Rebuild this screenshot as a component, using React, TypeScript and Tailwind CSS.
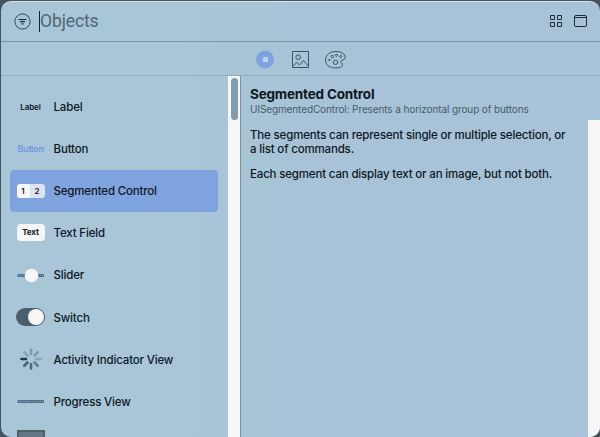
import type { ReactNode } from 'react';

const dots = 'bg-[repeating-linear-gradient(90deg,#8098a8_0_1px,#a8c4d4_1px_2px)]';

function Track({ split }: { split?: boolean }) {
  return (
    <svg width="28" height="13" viewBox="0 0 28 13" className="overflow-visible">
      <path d="M1 5.5h26M1 7.5h26" stroke="#566b7a" strokeWidth="1" />
      <path d="M1 6.5h26" stroke="#8ea5b4" strokeWidth="1" />
      <path d="M1 6.5h13" stroke="#6c8cd4" strokeWidth="1" />
      <path d="M.5 5.5v2" stroke="#6080d0" />
      <path d="M14 6.5h13" stroke="#566b78" strokeDasharray="1 1" />
      {split && <circle cx="14.5" cy="6.5" r="6.8" fill="#f6f6f6" />}
    </svg>
  );
}

function Spinner() {
  const colors = ['#8299a7', '#8097a5', '#8ba3b1', '#667d8b', '#526874', '#4c606b', '#263640', '#8ba3b1'];
  return (
    <svg width="22" height="22" viewBox="-11 -11 22 22">
      {colors.map((c, i) => (
        <path key={i} d="M0-5V-9.5" stroke={c} strokeWidth="2.6" strokeLinecap="round" transform={`rotate(${i * 45})`} />
      ))}
    </svg>
  );
}

const items: { name: string; icon: ReactNode }[] = [
  { name: 'Label', icon: <span className="pt-px text-[8px] font-semibold tracking-[-0.1px]">Label</span> },
  { name: 'Button', icon: <span className="pt-px text-[9px] font-semibold tracking-[-0.4px] text-[#7198e2]">Button</span> },
  {
    name: 'Segmented Control',
    icon: (
      <span className="flex h-[14px] w-7 overflow-hidden rounded-[3px] bg-[#dce5ef] text-[8px] font-semibold leading-[14px]">
        <span className="w-[13px] rounded-[3px] bg-[#f7f7f7] text-center">1</span>
        <span className="flex-1 text-center">2</span>
      </span>
    ),
  },
  {
    name: 'Text Field',
    icon: <span className="h-[17px] w-7 rounded-[4px] bg-[#f6f6f6] text-center text-[8px] font-bold leading-[17px] tracking-[-0.1px]">Text</span>,
  },
  { name: 'Slider', icon: <Track split /> },
  {
    name: 'Switch',
    icon: (
      <span className="flex h-[18px] w-[29px] shrink-0 items-center justify-end rounded-full bg-[#4b5f6b] pr-px">
        <span className="size-4 rounded-full bg-[#f6f6f6]" />
      </span>
    ),
  },
  { name: 'Activity Indicator View', icon: <Spinner /> },
  { name: 'Progress View', icon: <Track /> },
];

function Toolbar() {
  return (
    <div className="flex h-[34px] items-center pl-[254px]">
      <svg width="92" height="20" viewBox="255 49 92 20" fill="none" stroke="#3e535f">
        <circle cx="265" cy="59.5" r="9" fill="#7ea2e0" stroke="none" />
        <path d="M263 57h5v5h-5z" fill="#bfd3e8" stroke="none" />
        <path d="M292.5 51.5h16v16h-16z" />
        <circle cx="298.2" cy="57.2" r="2.3" />
        <path d="M293 66l4-3.5 2.5 2.5 4-4.5 5 6" />
        <path d="M331.5 67.5c-3.7-.8-6-4-6-7.5c0-5 4.5-8.5 10.5-8.5c5.5 0 9.3 2.5 9.3 5.7c0 3.4-4.5 2.2-4.5 4.3c0 1.3 1.7 1.6 1.7 3.2c0 3-6 3.9-11 2.8z" />
        <circle cx="335.5" cy="62.3" r="2.2" />
        <circle cx="329.5" cy="60" r="1.1" fill="#3e535f" stroke="none" />
        <circle cx="332.3" cy="56.5" r="1.2" />
        <circle cx="336.5" cy="55.3" r="1" />
        <circle cx="340.7" cy="56.5" r="1" />
      </svg>
    </div>
  );
}

export default function App() {
  return (
    <div className="h-[437px] w-[600px] overflow-hidden bg-[#44535e] pl-px pt-px font-[Inter,sans-serif] text-[#0d171e]">
      <div className="flex h-[436px] w-[599px] flex-col overflow-hidden rounded-[10px] border-t border-[#d5e3ec] bg-linear-to-r from-[#a8c6d7] from-30% to-[#a8c3d7] to-50%">
        <header className="flex h-[39px] shrink-0 items-center pl-[13px] pr-3">
          <svg width="17" height="17" viewBox="0 0 17 17" fill="none" stroke="#30434e">
            <circle cx="8.5" cy="8.5" r="7.6" />
            <path d="M4.5 6.5h8M6 8.7h5M7.5 10.9h2" stroke="#1a2932" strokeWidth="1.2" />
          </svg>
          <div className="ml-2 h-[21px] w-px bg-[#15232c]" />
          <div className="grow pb-px font-[Roboto,sans-serif] text-[17.5px] leading-5 tracking-[-0.1px] text-[#516674]">Objects</div>
          <svg width="39" height="13" viewBox="0 0 39 13" fill="none" stroke="#1c2d37">
            <path d="M1.5 .5h4v4h-4zM8.5 .5h4v4h-4zM1.5 7.5h4v4h-4zM8.5 7.5h4v4h-4z" />
            <rect x="25.5" y=".5" width="12" height="11" rx="1.5" />
            <path d="M26 2.5h11" />
          </svg>
        </header>
        <div className="h-px shrink-0 bg-[#7c96a5]" />
        <Toolbar />
        <div className={`h-px shrink-0 ${dots}`} />
        <main className="flex min-h-0 grow">
          <aside className="w-[227px] shrink-0 overflow-hidden pl-[9px] pt-[9px]">
            {items.map((item, i) => (
              <div
                key={item.name}
                className={`flex h-[42.2px] w-[208px] items-center rounded-[4px] pl-[6.5px] ${i === 2 ? 'bg-[#7fa3df]' : ''}`}
              >
                <span className="flex w-7 shrink-0 items-center justify-center">{item.icon}</span>
                <span className="ml-[9px] whitespace-nowrap pt-[2px] text-[11.5px] font-medium tracking-[-0.17px]">{item.name}</span>
              </div>
            ))}
            <div className="ml-[7px] mt-[7px] h-4 w-7 border-2 border-[#4c606c] bg-[#627884]" />
          </aside>
          <div className="w-[13px] shrink-0 border-r border-[#7892a2] bg-[#f6f6f6] pl-[3px] pt-[2px]">
            <div className="h-[42px] w-[7px] rounded-full bg-[#829cac]" />
          </div>
          <section className="min-w-0 grow">
            <div className="h-11 pl-[9px] pt-[9px]">
              <h1 className="whitespace-nowrap text-[13.5px] font-bold leading-[18px] tracking-[-0.18px]">Segmented Control</h1>
              <p className="whitespace-nowrap text-[10px] leading-3 tracking-[-0.11px] text-[#465b68]">UISegmentedControl: Presents a horizontal group of buttons</p>
            </div>
            <div className="flex h-[320px] justify-between">
              <div className="whitespace-nowrap pl-[9px] pt-[8px] text-[11.5px] font-medium leading-[14px] tracking-[-0.17px]">
                <p>The segments can represent single or multiple selection, or<br />a list of commands.</p>
                <p className="mt-[11px]">Each segment can display text or an image, but not both.</p>
              </div>
              <div className="w-3 shrink-0 bg-[#f6f6f6]" />
            </div>
          </section>
        </main>
      </div>
    </div>
  );
}
